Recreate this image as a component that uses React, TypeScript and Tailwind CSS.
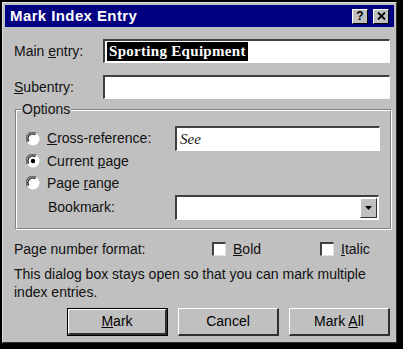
import React from "react";

const font = { fontFamily: '"Liberation Sans", Arial, sans-serif' };

function Sunken({ className = "", children }: { className?: string; children?: React.ReactNode }) {
  return (
    <div className={`border-t-2 border-l-2 border-t-[#404040] border-l-[#404040] border-b border-r border-b-white border-r-white ${className}`}>
      {children}
    </div>
  );
}

function Radio({ checked }: { checked?: boolean }) {
  return (
    <svg width="14" height="14" viewBox="0 0 14 14" className="shrink-0">
      <circle cx="7" cy="7" r="6.5" fill="#ffffff" />
      <path d="M1.3 10 A6.3 6.3 0 0 1 10 1.3" stroke="#6a6a6a" strokeWidth="1.5" fill="none" />
      <path d="M2.7 9.3 A4.8 4.8 0 0 1 9.3 2.7" stroke="#1a1a1a" strokeWidth="1.3" fill="none" />
      {checked && <circle cx="7" cy="7" r="2.2" fill="#000" />}
    </svg>
  );
}

function Check() {
  return (
    <div className="w-[14px] h-[14px] bg-white border-t-2 border-l-2 border-t-[#404040] border-l-[#404040] border-b border-r border-b-[#e0e0e0] border-r-[#e0e0e0] shrink-0" />
  );
}

function Btn({ children, def }: { children: React.ReactNode; def?: boolean }) {
  return (
    <div className={`w-[101px] h-[28px] ${def ? "border border-black" : ""}`}>
      <div className="w-full h-full border-t border-l border-t-white border-l-white border-b-2 border-r-2 border-b-[#303030] border-r-[#303030] flex items-center justify-center text-[14px] text-black">
        <span>{children}</span>
      </div>
    </div>
  );
}

export default function App() {
  return (
    <div className="w-[403px] h-[349px] bg-black overflow-hidden" style={font}>
      <div className="ml-[2px] mt-[2px] w-[395px] h-[341px] bg-[#c0c0c0] border-t border-l border-t-[#dcdcdc] border-l-[#dcdcdc] border-b border-r border-b-[#303030] border-r-[#303030] p-[2px] flex flex-col">
        {/* Title bar */}
        <div className="h-[22px] bg-[#000080] flex items-center pl-[5px] pr-[5px]">
          <span className="text-white font-bold text-[15px] tracking-[0.4px] flex-1">Mark Index Entry</span>
          <div className="flex gap-[5px]">
            <div className="w-[16px] h-[15px] bg-[#c0c0c0] border-t border-l border-t-white border-l-white border-b border-r border-b-black border-r-black flex items-center justify-center text-[12px] font-bold leading-none text-black">?</div>
            <div className="w-[16px] h-[15px] bg-[#c0c0c0] border-t border-l border-t-white border-l-white border-b border-r border-b-black border-r-black flex items-center justify-center">
              <svg width="9" height="8" viewBox="0 0 9 8"><path d="M1 0.5 L8 7.5 M8 0.5 L1 7.5" stroke="#000" strokeWidth="1.8" /></svg>
            </div>
          </div>
        </div>

        {/* Body */}
        <div className="flex flex-col pl-[9px] pr-[3px] text-[14px] text-[#111]">
          <div className="flex items-center mt-[12px]">
            <span className="w-[89px]">Main <span className="underline">e</span>ntry:</span>
            <Sunken className="w-[287px] h-[24px] bg-white flex items-center pl-[2px]">
              <span className="bg-black text-white font-bold text-[15px] leading-[19px] px-[2px] tracking-[0.3px]" style={{ fontFamily: '"Liberation Serif", "Times New Roman", serif' }}>Sporting Equipment</span>
            </Sunken>
          </div>
          <div className="flex items-center mt-[12px]">
            <span className="w-[89px]"><span className="underline">S</span>ubentry:</span>
            <Sunken className="w-[287px] h-[24px] bg-white" />
          </div>

          {/* Options group */}
          <div className="relative mt-[10px] ml-[1px] w-[377px] h-[121px] border border-t-[#808080] border-l-[#808080] border-b-white border-r-white">
            <div className="absolute inset-0 border border-t-white border-l-white border-b-[#808080] border-r-[#808080]" />
            <span className="absolute left-[5px] -top-[9px] bg-[#c0c0c0] px-[1px] leading-[16px]">Options</span>
            <div className="flex flex-col pl-[10px] pt-[16px]">
              <div className="flex items-center h-[25px]">
                <Radio />
                <span className="ml-[7px] w-[128px]"><span className="underline">C</span>ross-reference:</span>
                <Sunken className="w-[205px] h-[25px] bg-white flex items-center pl-[3px]">
                  <span className="italic text-[15px]" style={{ fontFamily: '"Liberation Serif", "Times New Roman", serif' }}>See</span>
                </Sunken>
              </div>
              <div className="flex items-center h-[22px] mt-[-1px]">
                <Radio checked />
                <span className="ml-[7px]">Current <span className="underline">p</span>age</span>
              </div>
              <div className="flex items-center h-[22px]">
                <Radio />
                <span className="ml-[7px]">Page <span className="underline">r</span>ange</span>
              </div>
              <div className="flex items-center h-[25px] mt-[1px]">
                <span className="ml-[22px] w-[127px]">Bookmark:</span>
                <Sunken className="w-[204px] h-[25px] bg-white flex justify-end items-stretch p-[1px]">
                  <div className="w-[17px] bg-[#c0c0c0] border-t border-l border-t-white border-l-white border-b border-r border-b-[#303030] border-r-[#303030] flex items-center justify-center">
                    <svg width="7" height="4" viewBox="0 0 7 4"><path d="M0 0 H7 L3.5 4 Z" fill="#000" /></svg>
                  </div>
                </Sunken>
              </div>
            </div>
          </div>

          {/* Page number format */}
          <div className="flex items-center mt-[12px] h-[14px]">
            <span className="w-[198px]">Page number format:</span>
            <Check />
            <span className="ml-[7px] w-[87px]"><span className="underline">B</span>old</span>
            <Check />
            <span className="ml-[7px]"><span className="underline">I</span>talic</span>
          </div>

          <div className="mt-[9px] leading-[18px]">
            This dialog box stays open so that you can mark multiple<br />index entries.
          </div>

          <div className="flex justify-end gap-[10px] mt-[7px] pr-[1px]">
            <Btn def><span className="underline">M</span>ark</Btn>
            <Btn>Cancel</Btn>
            <Btn>Mark <span className="underline">A</span>ll</Btn>
          </div>
        </div>
      </div>
    </div>
  );
}
